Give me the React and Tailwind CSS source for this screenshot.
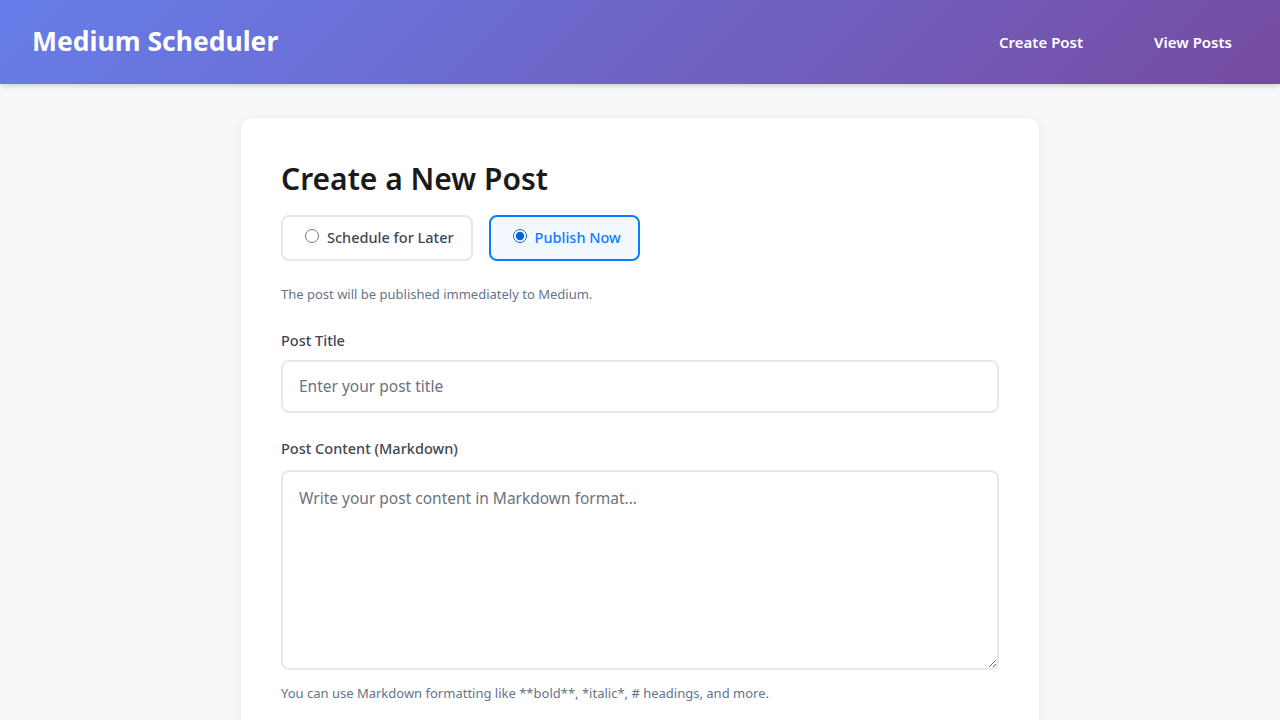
import React, { useState } from 'react';

const App = () => {
  const [mode, setMode] = useState('now');

  return (
    <div className="min-h-screen bg-[#f7f8fa] font-['Noto_Sans',sans-serif]">
      <header className="h-[84px] flex items-center justify-between pl-8 pr-8 bg-[linear-gradient(135deg,#667eea_0%,#764ba2_100%)] shadow-md">
        <h1 className="text-[26.5px] font-bold text-white">Medium Scheduler</h1>
        <nav className="flex gap-[39px]">
          <a href="#" className="px-4 py-2 text-white font-semibold text-[15px]">Create Post</a>
          <a href="#" className="px-4 py-2 text-white font-semibold text-[15px]">View Posts</a>
        </nav>
      </header>

      <main className="pt-[33px]">
        <div className="w-[800px] mx-auto bg-white rounded-xl border border-[#eceef1] shadow-[0_2px_10px_rgba(0,0,0,0.06)] px-10 pt-[42px] pb-10">
          <h2 className="text-[30px] font-semibold text-[#1a1a1a] leading-tight">Create a New Post</h2>

          <div className="flex gap-4 mt-[17px]">
            <label className={`flex items-center gap-2 h-[46px] pl-[22px] pr-[17px] rounded-lg border-2 cursor-pointer ${mode === 'later' ? 'border-[#0a7cff] bg-[#f3f8ff] text-[#0a7cff]' : 'border-[#e2e8f0] text-[#3f4752]'}`}>
              <input type="radio" name="mode" checked={mode === 'later'} onChange={() => setMode('later')} className="w-[14px] h-[14px] -mt-[3px] accent-[#0066d6]" />
              <span className="text-[14.5px] font-medium">Schedule for Later</span>
            </label>
            <label className={`flex items-center gap-2 h-[46px] pl-[22px] pr-[17px] rounded-lg border-2 cursor-pointer ${mode === 'now' ? 'border-[#0a7cff] bg-[#f3f8ff] text-[#0a7cff]' : 'border-[#e2e8f0] text-[#3f4752]'}`}>
              <input type="radio" name="mode" checked={mode === 'now'} onChange={() => setMode('now')} className="w-[14px] h-[14px] -mt-[3px] accent-[#0066d6]" />
              <span className="text-[14.5px] font-medium">Publish Now</span>
            </label>
          </div>

          <p className="mt-[24px] text-[13px] text-[#64748b]">
            {mode === 'now' ? 'The post will be published immediately to Medium.' : 'The post will be published at the scheduled time.'}
          </p>

          <div className="mt-[26px]">
            <label className="block text-[14.5px] font-medium text-[#3f4752] mb-[8px]">Post Title</label>
            <input
              type="text"
              placeholder="Enter your post title"
              className="w-full h-[53px] px-4 rounded-lg border-2 border-[#e5e9ee] text-[15.5px] placeholder:text-[#6b7280] outline-none"
            />
          </div>

          <div className="mt-[25px]">
            <label className="block text-[14.5px] font-medium text-[#3f4752] mb-[10px]">Post Content (Markdown)</label>
            <textarea
              placeholder="Write your post content in Markdown format..."
              className="block w-full h-[200px] px-4 py-[15px] rounded-lg border-2 border-[#e5e9ee] text-[15.5px] placeholder:text-[#6b7280] outline-none resize-y"
            />
            <p className="mt-[14px] text-[13px] text-[#64748b]">
              You can use Markdown formatting like **bold**, *italic*, # headings, and more.
            </p>
          </div>
        </div>
      </main>
    </div>
  );
};

export default App;
